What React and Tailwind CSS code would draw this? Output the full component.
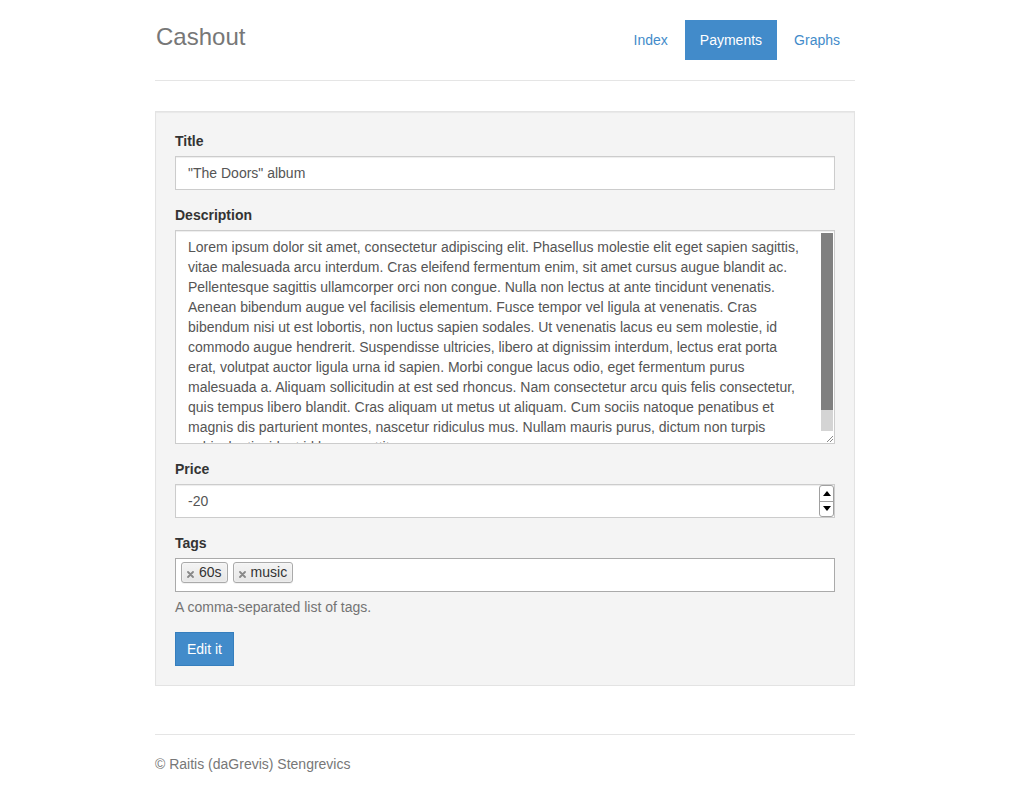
const description =
  "Lorem ipsum dolor sit amet, consectetur adipiscing elit. Phasellus molestie elit eget sapien sagittis, vitae malesuada arcu interdum. Cras eleifend fermentum enim, sit amet cursus augue blandit ac. Pellentesque sagittis ullamcorper orci non congue. Nulla non lectus at ante tincidunt venenatis. Aenean bibendum augue vel facilisis elementum. Fusce tempor vel ligula at venenatis. Cras bibendum nisi ut est lobortis, non luctus sapien sodales. Ut venenatis lacus eu sem molestie, id commodo augue hendrerit. Suspendisse ultricies, libero at dignissim interdum, lectus erat porta erat, volutpat auctor ligula urna id sapien. Morbi congue lacus odio, eget fermentum purus malesuada a. Aliquam sollicitudin at est sed rhoncus. Nam consectetur arcu quis felis consectetur, quis tempus libero blandit. Cras aliquam ut metus ut aliquam. Cum sociis natoque penatibus et magnis dis parturient montes, nascetur ridiculus mus. Nullam mauris purus, dictum non turpis vehicula, tincidunt id lacus porttitor.";

function Tag({ label }) {
    return (
        <span className="ml-[5px] mt-[3px] flex h-[21px] items-center rounded-[3px] border border-[#aaa] bg-gradient-to-b from-[#f4f4f4] to-[#e6e6e6] pl-[5px] pr-[5px] leading-[19px] text-[#333] shadow-[0_0_2px_white_inset,0_1px_0_rgba(0,0,0,0.05)]">
            <svg className="mt-[3px] mr-[5px] h-[7px] w-[7px]" viewBox="0 0 7 7">
                <path d="M1 1L6 6M6 1L1 6" stroke="#888" strokeWidth="1.8" strokeLinecap="round" />
            </svg>
            {label}
        </span>
    );
}

export default function App() {
    return (
        <div className="min-h-screen bg-white font-['Liberation_Sans',Arial,sans-serif] text-[14px] leading-[20px] text-[#333]">
            <div className="mx-auto w-[700px] pt-5">
                {/* Header */}
                <div className="flex items-start justify-between border-b border-[#e5e5e5] pb-[20px]">
                    <h3 className="-mt-[3px] pl-px text-[24px] leading-[40px] text-[#777]">Cashout</h3>
                    <ul className="flex gap-[2px]">
                        <li>
                            <a className="block px-[15px] py-[10px] text-[#428bca]">Index</a>
                        </li>
                        <li>
                            <a className="block bg-[#428bca] px-[15px] py-[10px] text-white">Payments</a>
                        </li>
                        <li>
                            <a className="block px-[15px] py-[10px] text-[#428bca]">Graphs</a>
                        </li>
                    </ul>
                </div>

                {/* Form */}
                <div className="mt-[30px] border border-[#e3e3e3] bg-[#f4f4f4] p-[19px] shadow-[inset_0_1px_1px_rgba(0,0,0,0.05)]">
                    <div className="mb-[15px]">
                        <label className="mb-[5px] block font-bold">Title</label>
                        <input
                            className="block h-[34px] w-full border border-[#ccc] bg-white px-3 py-[6px] text-[#555] shadow-[inset_0_1px_1px_rgba(0,0,0,0.075)] outline-none"
                            defaultValue={'"The Doors" album'}
                        />
                    </div>

                    <div className="mb-[15px]">
                        <label className="mb-[5px] block font-bold">Description</label>
                        <div className="flex h-[214px] w-full border border-[#ccc] bg-white shadow-[inset_0_1px_1px_rgba(0,0,0,0.075)]">
                            <div className="min-w-0 flex-1 overflow-hidden py-[6px] pl-3 pr-[17px] text-[#555]">{description}</div>
                            {/* scrollbar */}
                            <div className="flex w-[13px] flex-col">
                                <div className="mt-[2px] mr-px h-[177px] bg-[#808080]" />
                                <div className="mr-px flex-1 bg-[#d4d4d4]" />
                                <div className="flex h-[12px] items-end justify-end">
                                    <svg className="h-[10px] w-[10px]" viewBox="0 0 10 10">
                                        <path d="M3 9L9 3M6 9L9 6" stroke="#888" strokeWidth="1" />
                                    </svg>
                                </div>
                            </div>
                        </div>
                    </div>

                    <div className="mb-[15px]">
                        <label className="mb-[5px] block font-bold">Price</label>
                        <div className="flex h-[34px] w-full border border-[#ccc] bg-white shadow-[inset_0_1px_1px_rgba(0,0,0,0.075)]">
                            <input className="min-w-0 flex-1 bg-transparent px-3 py-[6px] text-[#555] outline-none" defaultValue="-20" />
                            <div className="flex w-[15px] flex-col rounded-[3px] border border-[#a0a0a0] bg-white">
                                <div className="flex flex-1 items-center justify-center border-b border-[#a0a0a0]">
                                    <svg className="h-[5px] w-[8px]" viewBox="0 0 8 5">
                                        <path d="M0 5L4 0L8 5Z" fill="#000" />
                                    </svg>
                                </div>
                                <div className="flex flex-1 items-center justify-center">
                                    <svg className="h-[5px] w-[8px]" viewBox="0 0 8 5">
                                        <path d="M0 0L8 0L4 5Z" fill="#000" />
                                    </svg>
                                </div>
                            </div>
                        </div>
                    </div>

                    <div className="mb-[15px]">
                        <label className="mb-[5px] block font-bold">Tags</label>
                        <div className="flex h-[34px] w-full items-start border border-[#aaa] bg-white">
                            <Tag label="60s" />
                            <Tag label="music" />
                        </div>
                        <p className="mb-[10px] mt-[5px] text-[#737373]">A comma-separated list of tags.</p>
                    </div>

                    <button className="h-[34px] border border-[#357ebd] bg-[#428bca] px-[11px] text-white">Edit it</button>
                </div>

                {/* Footer */}
                <div className="mt-[48px] border-t border-[#e5e5e5] pt-[19px] text-[#777]">
                    <p>© Raitis (daGrevis) Stengrevics</p>
                </div>
            </div>
        </div>
    );
}
